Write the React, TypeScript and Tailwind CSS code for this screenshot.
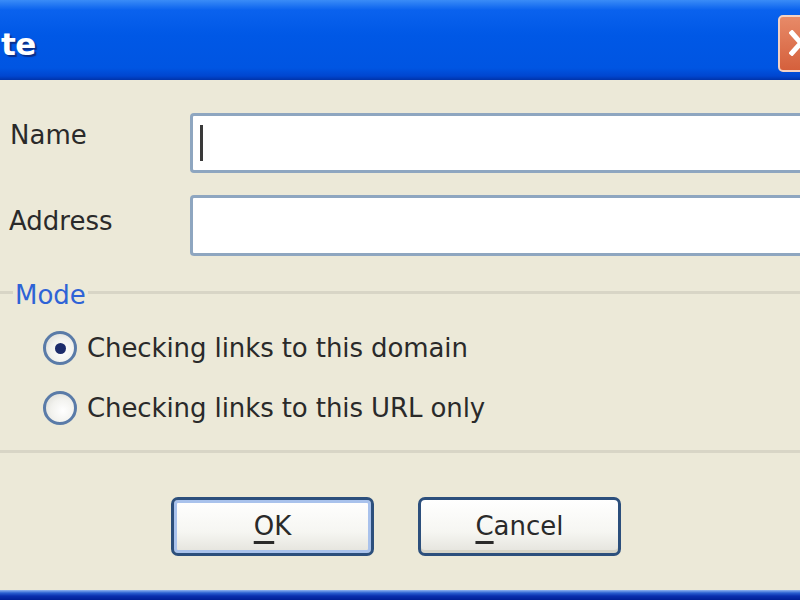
import React from "react"

const font = { fontFamily: '"DejaVu Sans", Tahoma, Verdana, sans-serif' }

const Radio = ({ checked, label }: { checked?: boolean; label: string }) => {
	return (
		<div className="flex items-center h-[40px]">
			<div className="ml-[43px] w-[34px] h-[34px] rounded-full border-[3px] border-[#5a7ba8] bg-[radial-gradient(circle_at_60%_60%,#ffffff_0%,#f2f2ee_50%,#d6d6cf_100%)] flex items-center justify-center shrink-0">
				{checked && <div className="w-[11px] h-[11px] rounded-full bg-[#1d2c6b]" />}
			</div>
			<span className="ml-[10px] text-[26px] text-[#2a2a2a] tracking-[-0.1px]">{label}</span>
		</div>
	)
}

const XpButton = ({ letter, rest, focused }: { letter: string; rest: string; focused?: boolean }) => {
	return (
		<button
			className={
				"w-[203px] h-[59px] rounded-[7px] border-[3px] border-[#2c4f7c] flex items-center justify-center text-[26px] text-[#2a2a2a] bg-[linear-gradient(to_bottom,#ffffff_0%,#f6f6f2_60%,#e4e3dc_100%)] " +
				(focused ? "shadow-[inset_0_0_0_3px_#a9c2ec]" : "shadow-[inset_0_-3px_0_#d6d4c8]")
			}
		>
			<span className="underline underline-offset-[6px] decoration-[3px]">{letter}</span>
			<span>{rest}</span>
		</button>
	)
}

export default function App() {
	return (
		<div style={font} className="w-[800px] h-[600px] bg-[#ece9d8] flex flex-col overflow-hidden">
			{/* title bar */}
			<div className="h-[80px] shrink-0 flex items-center justify-between bg-[linear-gradient(to_bottom,#3a8cf7_0px,#0a62ee_10px,#0058e6_35px,#0055e2_68px,#0046d0_76px,#0033aa_80px)]">
				<span className="mt-[8px] ml-[1px] text-[31px] font-bold text-white tracking-[-0.5px] [text-shadow:2px_2px_1px_#0b2f8a]">te</span>
				<div className="mr-[-24px] mt-[6px] w-[46px] h-[57px] rounded-[5px] border-2 border-[#f3d2c4] bg-[linear-gradient(to_bottom,#e78a68,#d5603c)] flex items-center pl-[9px]">
					<svg width="24" height="26" viewBox="0 0 24 26">
						<path d="M3 3 L21 23 M21 3 L3 23" stroke="white" strokeWidth="5" strokeLinecap="square" />
					</svg>
				</div>
			</div>

			{/* name */}
			<div className="flex items-start mt-[33px] h-[60px]">
				<span className="w-[190px] pl-[10px] mt-[3px] text-[26px] text-[#2a2a2a]">Name</span>
				<div className="flex-1 -mr-[10px] h-full rounded-[4px] border-[3px] border-[#8ea6c0] bg-white flex items-center pl-[7px]">
					<div className="w-[3px] h-[36px] bg-[#3a3a3a]" />
				</div>
			</div>

			{/* address */}
			<div className="flex items-start mt-[22px] h-[61px]">
				<span className="w-[190px] pl-[9px] mt-[7px] text-[26px] text-[#2a2a2a]">Address</span>
				<div className="flex-1 -mr-[10px] h-full rounded-[4px] border-[3px] border-[#8ea6c0] bg-white" />
			</div>

			{/* mode group */}
			<fieldset className="mt-[17px] border-y-[3px] border-[#d8d5c6] pt-[17px] pb-[22px]">
				<legend className="ml-[13px] px-[2px] pt-[6px] text-[26px] text-[#2e63d6] leading-[32px]">Mode</legend>
				<div className="flex flex-col gap-[20px]">
					<Radio checked label="Checking links to this domain" />
					<Radio label="Checking links to this URL only" />
				</div>
			</fieldset>

			{/* buttons */}
			<div className="flex mt-[44px] pl-[171px] gap-[44px]">
				<XpButton letter="O" rest="K" focused />
				<XpButton letter="C" rest="ancel" />
			</div>

			<div className="mt-auto h-[10px] shrink-0 bg-[linear-gradient(to_bottom,#8fb4f0_0px,#2a5fd0_3px,#0a2fae_6px,#001f96_10px)]" />
		</div>
	)
}
